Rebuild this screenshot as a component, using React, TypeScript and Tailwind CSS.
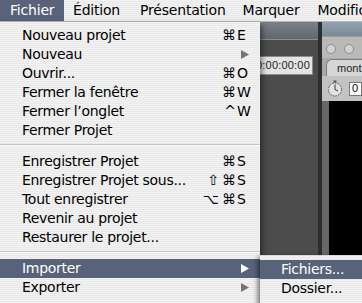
import React from 'react';

type Item =
  | { sep: true }
  | { sep?: false; label: string; mod?: string; k?: string; sub?: boolean; active?: boolean };

const items: Item[] = [
  { label: 'Nouveau projet', mod: '⌘', k: 'E' },
  { label: 'Nouveau', sub: true },
  { label: 'Ouvrir...', mod: '⌘', k: 'O' },
  { label: 'Fermer la fenêtre', mod: '⌘', k: 'W' },
  { label: 'Fermer l’onglet', mod: '^', k: 'W' },
  { label: 'Fermer Projet' },
  { sep: true },
  { label: 'Enregistrer Projet', mod: '⌘', k: 'S' },
  { label: 'Enregistrer Projet sous...', mod: '⇧⌘', k: 'S' },
  { label: 'Tout enregistrer', mod: '⌥⌘', k: 'S' },
  { label: 'Revenir au projet' },
  { label: 'Restaurer le projet...' },
  { sep: true },
  { label: 'Importer', sub: true, active: true },
  { label: 'Exporter', sub: true },
];

const stripes =
  'bg-[image:repeating-linear-gradient(180deg,#f2f2f2_0px,#f2f2f2_1px,#e9e9e9_1px,#e9e9e9_2px)]';

const Arrow = ({ white }: { white?: boolean }) => (
  <svg width="8" height="9" viewBox="0 0 8 9" className="mr-[11px] ml-auto">
    <polygon points="0,0 8,4.5 0,9" fill={white ? '#ffffff' : '#737373'} />
  </svg>
);

const Stopwatch = () => (
  <svg width="16" height="17" viewBox="0 0 16 17" className="shrink-0">
    <rect x="6.5" y="0.5" width="3" height="2" fill="#555" />
    <circle cx="8" cy="9.5" r="6.5" fill="#e2e2e2" stroke="#444" strokeWidth="1" strokeDasharray="1.5 1.2" />
    <path d="M8 9.5 L8 4.5 M8 9.5 L11 11" stroke="#333" strokeWidth="1" />
  </svg>
);

export default function App() {
  return (
    <div className="relative w-[362px] h-[303px] overflow-hidden bg-[#4c4c4c] font-['DejaVu_Sans',sans-serif] text-black">
      {/* menu bar */}
      <div className={`flex h-[22px] items-center text-[14px] tracking-[-0.2px] border-b border-[#b9b9b9] ${stripes}`}>
        <div className="flex h-full w-[64px] shrink-0 items-center pl-[10px] bg-[#586379] text-white">Fichier</div>
        <div className="ml-[9px] shrink-0">Édition</div>
        <div className="ml-[20px] shrink-0">Présentation</div>
        <div className="ml-[17px] shrink-0">Marquer</div>
        <div className="ml-[18px] shrink-0 whitespace-nowrap">Modification</div>
      </div>

      {/* application behind the menu */}
      <div className="flex h-[281px]">
        <div className="flex flex-1 flex-col">
          <div className="h-[18px] bg-[linear-gradient(180deg,#7a7e87,#62666e)] border-b border-[#8a8c90]" />
          <div className="flex justify-end pr-[5px] pt-[16px]">
            <div className="flex h-[19px] w-[110px] items-center justify-end border border-[#8c8c8c] bg-[#e4e4e4] pr-[2px] font-['Liberation_Sans',sans-serif] text-[11px] tracking-[0.2px] text-[#222]">
              00:00:00:00
            </div>
          </div>
        </div>
        <div className="w-[4px] bg-[#2e2e2e]" />
        <div className="flex w-[40px] flex-col">
          <div className="h-[14px] bg-[linear-gradient(180deg,#95a3b1,#7c8a98)]" />
          <div className="flex h-[22px] items-center gap-[8px] bg-[#b9b9b9] pl-[4px] pt-[2px] border-t border-[#9a9a9a]">
            <div className="h-[10px] w-[10px] rounded-full border border-[#8e8e8e] bg-[#d2d2d2]" />
            <div className="h-[10px] w-[10px] rounded-full border border-[#8e8e8e] bg-[#d2d2d2]" />
          </div>
          <div className="flex h-[18px] items-end bg-[#a9a9a9] pl-[4px]">
            <div className="flex h-[17px] flex-1 items-center overflow-hidden whitespace-nowrap rounded-tl-[6px] border-l border-t border-[#7d7d7d] bg-[#d6d6d6] pl-[10px] font-['Liberation_Sans',sans-serif] text-[11px] text-[#222]">
              montage
            </div>
          </div>
          <div className="flex h-[25px] items-center gap-[6px] bg-[#c2c2c2] pl-[5px]">
            <Stopwatch />
            <div className="flex h-[14px] flex-1 items-center border border-[#777] bg-white pl-[2px] font-['Liberation_Sans',sans-serif] text-[11px]">0</div>
          </div>
          <div className="flex flex-1">
            <div className="w-[7px] bg-[#686868]" />
            <div className="flex-1 bg-black" />
          </div>
        </div>
      </div>

      {/* Fichier menu */}
      <div className={`absolute left-0 top-[22px] w-[260px] h-[290px] pt-[4px] shadow-[2px_3px_6px_rgba(0,0,0,0.5)] ${stripes}`}>
        {items.map((it, i) =>
          it.sep ? (
            <div key={i} className="h-[12px] pt-[4px]">
              <div className="h-[1px] bg-[#c4c4c4]" />
              <div className="h-[1px] bg-[#fafafa]" />
            </div>
          ) : (
            <div
              key={i}
              className={`flex h-[19px] items-center pl-[22px] text-[14px] tracking-[-0.3px] ${
                it.active ? 'bg-[#586379] text-white' : ''
              }`}
            >
              <span className="flex-1 whitespace-nowrap">{it.label}</span>
              {it.sub ? (
                <Arrow white={it.active} />
              ) : (
                <>
                  <span className="flex w-[40px] justify-end gap-[3px] pr-[1px] tracking-normal">
                    {(it.mod ?? '').split('').map((m, j) => (
                      <span key={j}>{m}</span>
                    ))}
                  </span>
                  <span className="w-[12px] whitespace-nowrap tracking-normal">{it.k ?? ''}</span>
                  <span className="w-[11px]" />
                </>
              )}
            </div>
          )
        )}
      </div>

      {/* Importer submenu */}
      <div className={`absolute left-[260px] top-[255px] w-[110px] h-[52px] pt-[4px] border-t border-[#d8d8d8] shadow-[-2px_2px_5px_rgba(0,0,0,0.55)] text-[14px] tracking-[-0.3px] ${stripes}`}>
        <div className="flex h-[19px] items-center bg-[#586379] pl-[21px] text-white">Fichiers...</div>
        <div className="flex h-[19px] items-center pl-[21px]">Dossier...</div>
      </div>
    </div>
  );
}
